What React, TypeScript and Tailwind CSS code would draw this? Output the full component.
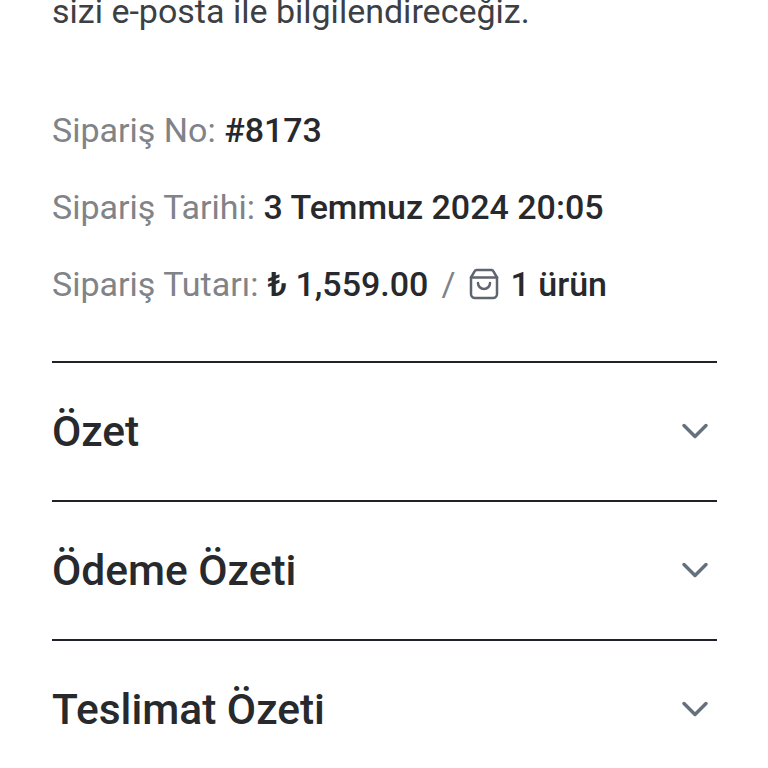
import { ChevronDown } from "lucide-react";

const sections = ["Özet", "Ödeme Özeti", "Teslimat Özeti"];

function BagIcon() {
  return (
    <svg width="32" height="32" viewBox="0 0 32 32" fill="none" stroke="#5f656e" strokeWidth="2.500" strokeLinecap="round" strokeLinejoin="round">
      <path d="M8.500 2h15a2 2 0 0 1 1.800 1.100L29 9.500V26a4 4 0 0 1-4 4H7a4 4 0 0 1-4-4V9.500l3.700-6.400A2 2 0 0 1 8.500 2z" />
      <path d="M3 9.500h26" />
      <path d="M10 15a6 6 0 0 0 12 0" />
    </svg>
  );
}

export default function App() {
  return (
    <div className="w-[768px] h-[768px] overflow-hidden bg-white font-['Roboto',sans-serif] pl-[52px] pr-[51px]">
      <p className="text-[34px] leading-[48px] text-[#3c4045] mt-[-13px]">sizi e-posta ile bilgilendireceğiz.</p>
      <div className="mt-[71px] flex flex-col gap-[29px] text-[34px] leading-[48px] text-[#808387]">
        <div>Sipariş No: <b className="font-medium text-[#27292d]">#8173</b></div>
        <div>Sipariş Tarihi: <b className="font-medium text-[#27292d]">3 Temmuz 2024 20:05</b></div>
        <div className="flex items-center">
          <span>Sipariş Tutarı:</span>
          <b className="ml-[9px] font-medium text-[#27292d]">₺ 1,559.00</b>
          <span className="mx-[13px]">/</span>
          <BagIcon />
          <b className="ml-[10px] font-medium text-[#27292d]">1 ürün</b>
        </div>
      </div>
      <div className="mt-[53px]">
        {sections.map((s) => (
          <div key={s} className="h-[139px] border-t-2 border-[#1f2228] flex items-center justify-between">
            <span className="text-[42.500px] font-medium text-[#27292d]">{s}</span>
            <ChevronDown className="mb-[2px] text-[#64707d]" size={44} strokeWidth={1.900} />
          </div>
        ))}
      </div>
    </div>
  );
}
